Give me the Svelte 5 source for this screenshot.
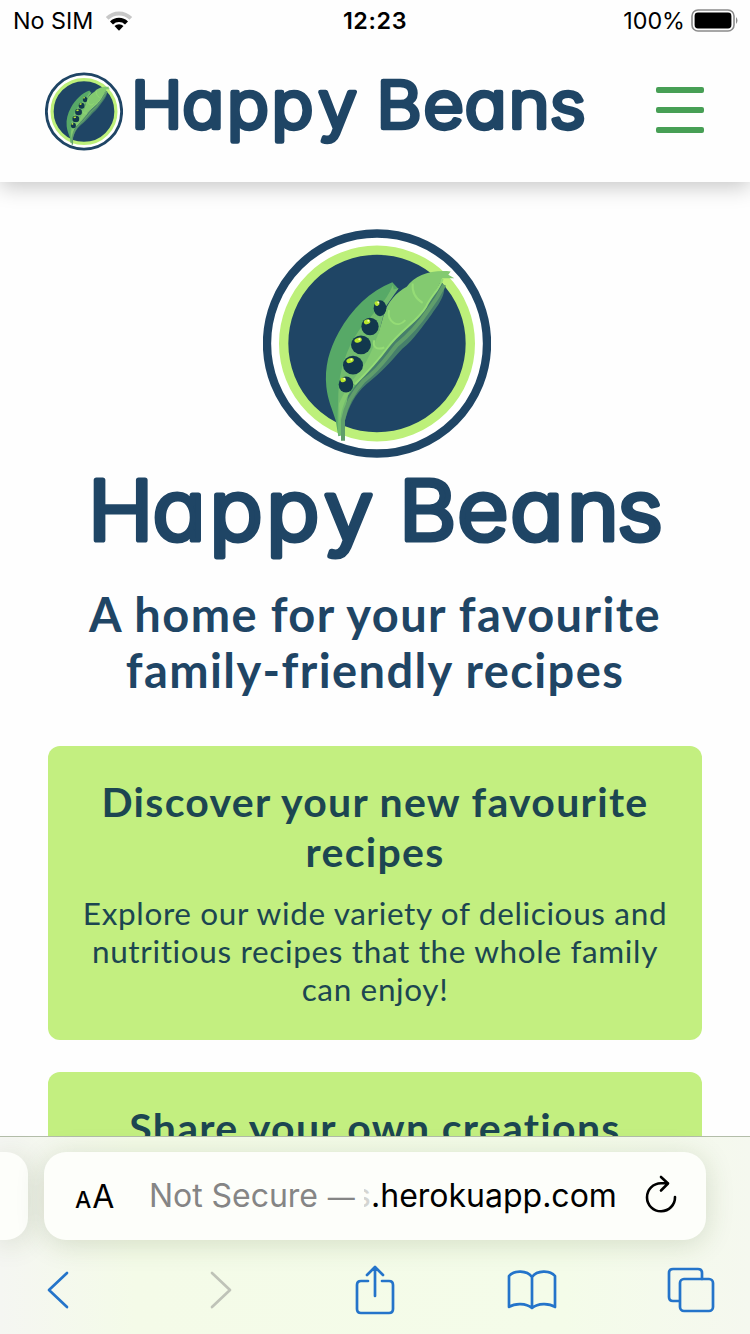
<script>
  const cards = [
    {
      title: ['Discover your new favourite', 'recipes'],
      body: [
        'Explore our wide variety of delicious and',
        'nutritious recipes that the whole family',
        'can enjoy!'
      ]
    },
    { title: ['Share your own creations'], body: [] }
  ];
  const peas = [
    [375, 264, 19, 24],
    [345, 319, 26, 26],
    [318, 374, 30, 28],
    [294, 435, 30, 28],
    [273, 493, 22, 24]
  ];
</script>

{#snippet badge(cls)}
  <svg class={cls} viewBox="24 28 684 684" aria-hidden="true">
    <circle cx="366" cy="370" r="330" fill="#fff" stroke="#1f4565" stroke-width="25" />
    <circle cx="366" cy="370" r="280" fill="#1f4565" stroke="#bdf07a" stroke-width="28" />
    <path d="M562 188 C578 210 558 246 530 282 C500 322 480 354 442 386 C406 425 380 458 334 492 C298 524 282 560 270 600 L244 590 L268 520 L400 380 Z" fill="#467f6b" />
    <path d="M412 186 C345 212 290 266 252 335 C222 390 208 440 214 500 C218 540 232 568 242 600 L250 648 L257 646 L254 560 L330 460 L390 250 L430 206 Z" fill="#57a967" />
    <path d="M414 194 C395 245 345 290 312 330 C275 385 252 450 250 520 C250 562 245 590 250 645 L258 646 L280 520 L350 420 L392 260 L431 204 L416 208 Z" fill="#72bc6e" />
    <path d="M254 612 C258 560 276 524 302 490 C342 448 350 440 372 414 C398 382 405 370 430 346 C466 316 496 292 516 256 C530 228 545 211 562 174 L598 174 L580 164 L587 154 C530 148 480 165 455 200 C425 215 395 250 386 285 C370 345 345 420 308 460 C285 490 265 520 252 550 Z" fill="#83ca70" />
    <path d="M264 662 L264 600 C272 556 296 514 326 482 C376 445 396 410 426 374 C466 342 498 303 520 270 C544 238 558 213 568 194" fill="none" stroke="#609e6b" stroke-width="12" />
    <path d="M300 492 C350 444 375 413 398 382 C435 330 490 302 514 258 C530 225 552 210 563 176 M402 270 C395 306 430 325 451 300 M473 190 C470 225 491 241 503 248 M358 360 C352 380 365 391 388 382" fill="none" stroke="#95dc76" stroke-width="6" />
    {#each peas as [x, y, rx, ry]}
      <ellipse cx={x} cy={y} {rx} {ry} fill="#12384d" />
      <ellipse cx={x - 4} cy={y - 16} rx={rx * 0.38} ry="7" fill="#b8e62b" transform="rotate(-18 {x} {y})" />
      <circle cx={x - 5} cy={y - 17} r="3" fill="#f3ffc4" />
    {/each}
  </svg>
{/snippet}

<div class="screen">
  <div class="status">
    <div class="carrier">
      <span>No SIM</span>
      <svg class="wifi" viewBox="0 0 28 22">
        <path d="M0.8 7 A18.6 18.6 0 0 1 27.2 7 L24.5 9.8 A14.8 14.8 0 0 0 3.5 9.8 Z" fill="#c7c7c7" />
        <path d="M5 11.5 A12.7 12.7 0 0 1 23 11.5 L20 14.4 A8.5 8.5 0 0 0 8 14.4 Z" />
        <path d="M9.5 16 A6.4 6.4 0 0 1 18.5 16 L14 20.8 Z" />
      </svg>
    </div>
    <div class="time">12:23</div>
    <div class="power">
      <span>100%</span>
      <svg class="battery" viewBox="0 0 48 23">
        <rect x="1" y="1" width="42" height="21" rx="6" fill="none" stroke="#8a8a8a" stroke-width="1.6" />
        <rect x="3.6" y="3.6" width="36.8" height="15.8" rx="3.4" />
        <path d="M45 8 Q48 11.5 45 15 Z" fill="#8a8a8a" />
      </svg>
    </div>
  </div>

  <header>
    <div class="brand">
      {@render badge('small-badge')}
      <svg class="small-word" viewBox="0 0 460 90" font-size="65" stroke-width="4.6">
        <text transform="scale(1.07 1)" y="56" x="-0.9 47 88.8 130.4 174">Happy</text>
        <text transform="scale(1.07 1)" y="56" x="228.5 272.5 311 352 390.5">Beans</text>
      </svg>
    </div>
    <div class="burger"><i></i><i></i><i></i></div>
  </header>

  <main>
    {@render badge('big-badge')}
    <svg class="big-word" viewBox="0 0 580 100" font-size="82.5" stroke-width="5.2">
      <text transform="scale(1.07 1)" y="66" x="1.8 62.2 115.5 168.5 222.5">Happy</text>
      <text transform="scale(1.07 1)" y="66" x="292.5 347 396.5 449.5 496.5">Beans</text>
    </svg>
    <h1><span>A home for your favourite</span><span>family-friendly recipes</span></h1>
    {#each cards as card}
      <section>
        <h2>{#each card.title as line}<span>{line}</span>{/each}</h2>
        <p>{#each card.body as line}<span>{line}</span>{/each}</p>
      </section>
    {/each}
  </main>

  <footer>
    <div class="tabs">
      <div class="previous"></div>
      <div class="address">
        <div class="size"><span>A</span><b>A</b></div>
        <div class="url"><span class="note">Not Secure <span class="dash">—</span></span><span class="fade">s</span><span class="host">.herokuapp.com</span></div>
        <svg class="reload" viewBox="0 0 34 40" fill="none" stroke="#000" stroke-width="2.6" stroke-linecap="round" stroke-linejoin="round">
          <path d="M31 22 A14 14 0 1 1 17 8.3 H24 M17 2 L24 8.5 L17 15.5" />
        </svg>
      </div>
    </div>
    <nav>
      <svg width="22" height="38" viewBox="0 0 22 38"><path d="M20 2 L2 19 L20 36" /></svg>
      <svg class="off" width="22" height="38" viewBox="0 0 22 38"><path d="M2 2 L20 19 L2 36" /></svg>
      <svg width="40" height="50" viewBox="0 0 40 50"><path d="M13 16 H6 Q2 16 2 20 V44 Q2 48 6 48 H34 Q38 48 38 44 V20 Q38 16 34 16 H27 M20 31 V3 M12 10 L20 2 L28 10" /></svg>
      <svg width="50" height="42" viewBox="0 0 50 42"><path d="M25 8 C20 1 7 1 2 7 V38 C8 34 19 34 25 39 C31 34 42 34 48 38 V7 C43 1 30 1 25 8 V39" /></svg>
      <svg width="48" height="46" viewBox="0 0 48 46"><path d="M12 34 H6 Q2 34 2 30 V6 Q2 2 6 2 H31 Q35 2 35 6 V12" /><rect x="13" y="12" width="33" height="32" rx="4" /></svg>
    </nav>
  </footer>
</div>

<style>
  :global(body) { margin: 0; background: #fff; }
  .screen {
    width: 750px; height: 1334px; overflow: hidden;
    display: flex; flex-direction: column;
    font-family: Inter, "Liberation Sans", sans-serif; background: #fefefe;
  }
  svg { display: block; flex: none; }
  .status {
    height: 40px; flex: none; box-sizing: border-box; padding: 0 11px 0 13px;
    display: grid; grid-template-columns: 1fr auto 1fr; align-items: center;
    font-size: 23.3px; line-height: 42px; color: #000;
    background: #fefefe; position: relative; z-index: 2;
  }
  .carrier, .power { display: flex; align-items: center; }
  .carrier { gap: 12px; }
  .power { justify-content: flex-end; gap: 6px; }
  .wifi { width: 28px; height: 22px; }
  .battery { width: 48px; height: 23px; margin-top: -2px; }
  .time { font-weight: 600; letter-spacing: 0.6px; margin-left: -2px; }
  header {
    height: 142px; flex: none; box-sizing: border-box; padding: 0 46px 0 45px;
    display: flex; justify-content: space-between; align-items: flex-start;
    background: #fefefe; box-shadow: 0 5px 20px rgba(0, 0, 0, 0.22); position: relative; z-index: 1;
  }
  .brand { display: flex; padding-top: 32px; gap: 9px; }
  .small-badge { width: 78px; height: 79px; }
  .small-word { width: 460px; height: 90px; overflow: visible; }
  text {
    font-family: Inter, sans-serif; font-weight: 300; font-feature-settings: "cv11";
    fill: #1f4565; stroke: #1f4565; stroke-linejoin: round; stroke-linecap: round;
  }
  .burger { display: flex; flex-direction: column; gap: 14px; padding-top: 47px; width: 48px; }
  .burger i { height: 6px; border-radius: 2px; background: #479f55; }
  main {
    flex: 1; min-height: 0; overflow: hidden; padding: 47px 48px 0;
    display: flex; flex-direction: column; align-items: center; text-align: center;
    font-family: Lato, "Open Sans", sans-serif; color: #1f4565;
  }
  .big-badge { width: 228px; height: 229px; margin-left: 4px; }
  .big-word { width: 580px; height: 100px; margin-top: 16px; margin-left: 2px; overflow: visible; }
  h1, h2, p { margin: 0; }
  h1 span, h2 span, p span { display: block; white-space: nowrap; }
  h1 { margin: 12px 0 48px; font-size: 47px; line-height: 56px; font-weight: 700; letter-spacing: 1.4px; }
  section {
    box-sizing: border-box; width: 654px; flex: none; padding: 31px 30px 32px; margin-bottom: 32px;
    border-radius: 12px; background: #c3ef80; color: #1c4651;
  }
  section:last-child { height: 294px; }
  h2 { font-size: 41px; line-height: 50px; font-weight: 700; letter-spacing: 1.3px; }
  p { margin-top: 17px; font-size: 31.5px; line-height: 38px; letter-spacing: 0.65px; }
  footer {
    position: relative; z-index: 2; height: 198px; flex: none; box-sizing: border-box; border-top: 1px solid #b3bda9;
    background: linear-gradient(90deg, #f5f6f2 0, #f4fbe8 18%, #f4fce9 75%, #f5f8ef 100%);
  }
  .tabs { display: flex; gap: 16px; padding-top: 15px; }
  .previous, .address { height: 88px; background: #fdfefa; box-shadow: 0 4px 28px rgba(55, 75, 25, 0.17); }
  .previous { width: 28px; border-radius: 0 22px 22px 0; }
  .address {
    width: 662px; box-sizing: border-box; border-radius: 22px; padding: 2px 28px 0 31px;
    display: flex; align-items: center; color: #000;
  }
  .size { display: flex; align-items: baseline; width: 74px; gap: 1px; line-height: 40px; padding-top: 2px; }
  .size span { font-size: 23px; font-weight: 500; }
  .size b { font-size: 32px; font-weight: 400; }
  .url { display: flex; flex: 1; align-items: baseline; font-size: 32px; line-height: 40px; white-space: nowrap; }
  .note { color: #858585; width: 215px; letter-spacing: -0.05px; }
  .dash { font-size: 27px; margin-left: 1px; }
  .fade { width: 7px; overflow: hidden; direction: rtl; color: #d4d5d2; }
  .reload { width: 34px; height: 40px; margin-top: -4px; }
  nav { display: grid; grid-template-columns: 163px 145px 152px 160px auto; align-items: center; padding: 25px 0 0 47px; height: 50px; }
  nav svg { fill: none; stroke: #2474ca; stroke-width: 2.7; stroke-linecap: round; stroke-linejoin: round; }
  nav .off { stroke: #bfc3b8; }
</style>
